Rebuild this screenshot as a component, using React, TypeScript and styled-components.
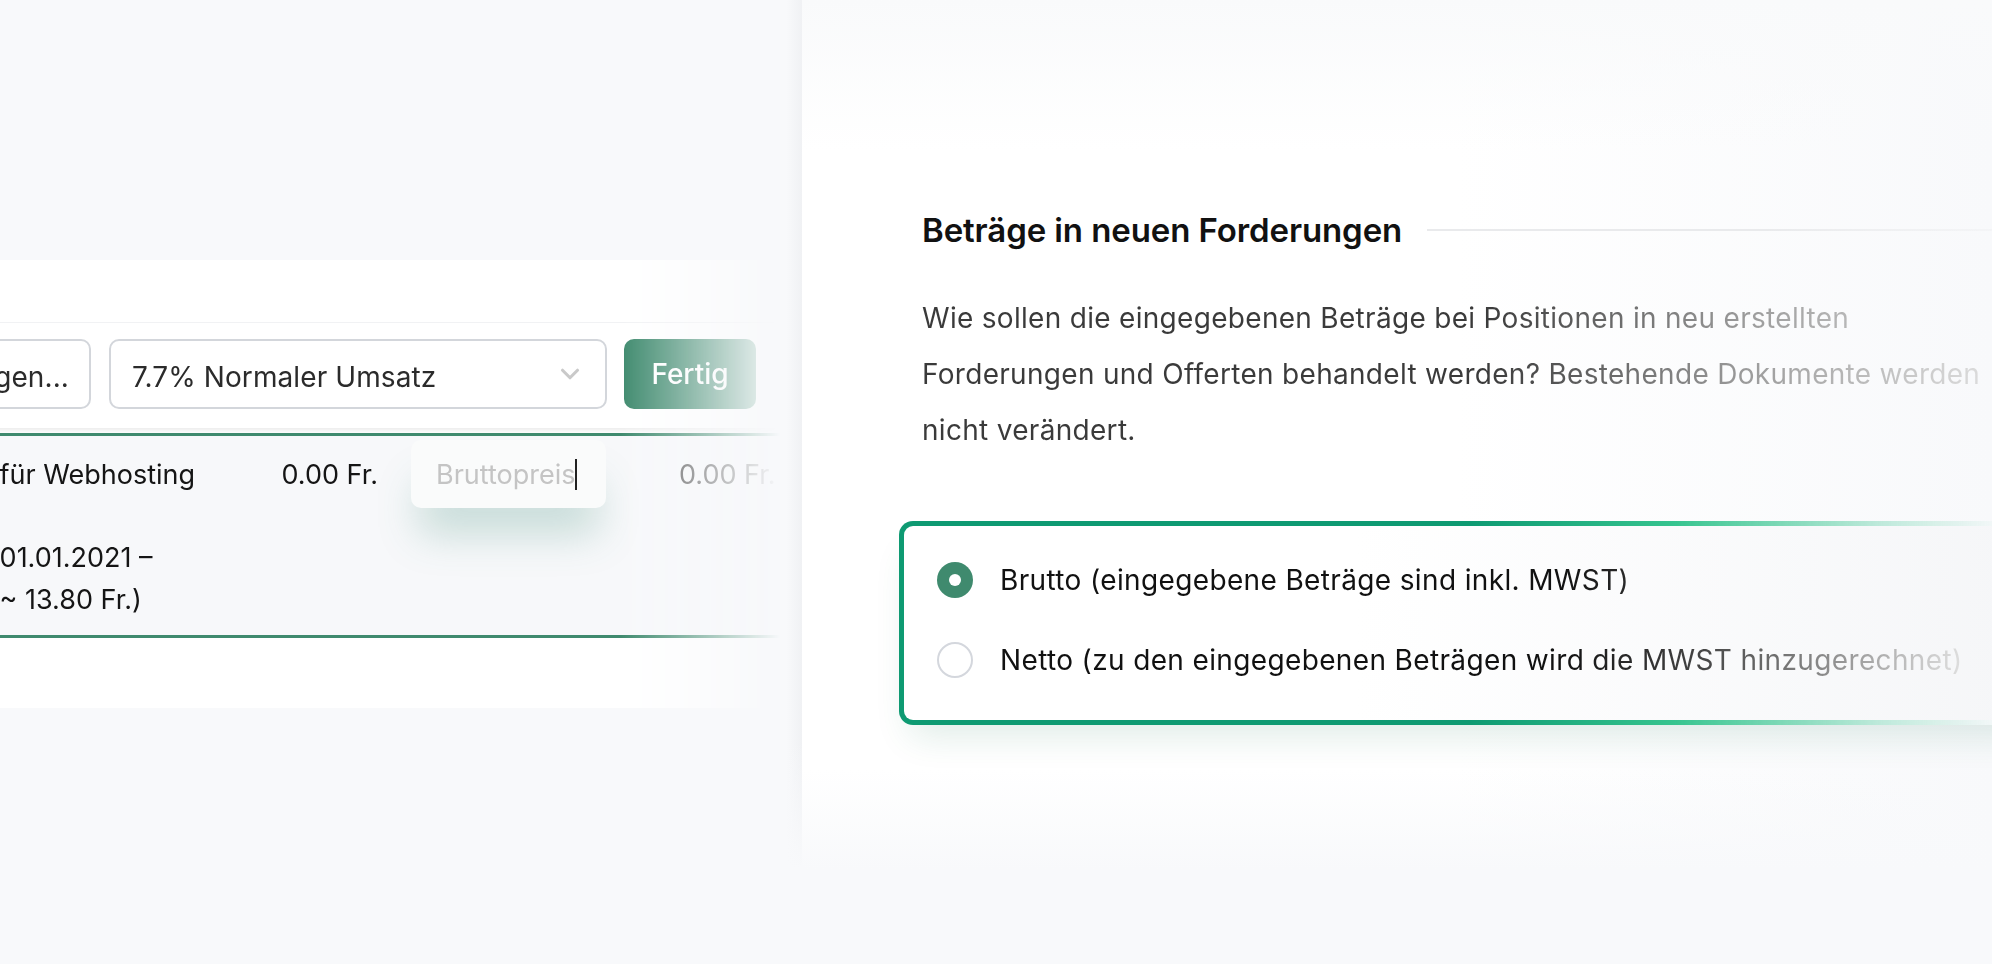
import styled, { createGlobalStyle } from 'styled-components';
import { ChevronDown } from 'lucide-react';

const GlobalStyle = createGlobalStyle`
  html, body {
    margin: 0;
    padding: 0;
    background: #f8f9fb;
  }
  body {
    font-family: 'Inter', 'Noto Sans', sans-serif;
    -webkit-font-smoothing: antialiased;
  }
  * {
    box-sizing: border-box;
  }
`;

const Page = styled.div`
  display: flex;
  align-items: flex-start;
  width: 1992px;
  height: 964px;
  overflow: hidden;
  background: #f8f9fb;
`;

/* left: the invoice editor, cut at the page edge */

const LeftPane = styled.div`
  width: 802px;
  height: 964px;
  flex-shrink: 0;
  padding-top: 260px;
  /* soft shade where the settings panel sits on top, fading out at the bottom */
  background:
    linear-gradient(to bottom, rgba(248, 249, 251, 0) 740px, #f8f9fb 870px) right top / 16px 870px no-repeat,
    linear-gradient(to left, rgba(20, 30, 50, 0.035), rgba(20, 30, 50, 0) 16px) right top / 16px 870px no-repeat;
`;

const Card = styled.div`
  margin-left: -340px;
  width: 1120px;
  padding: 62px 0 70px;
  background: #fff;
  box-shadow: 0 10px 30px rgba(20, 30, 50, 0.06);
  -webkit-mask-image: linear-gradient(to right, #000 0, #000 960px, transparent 1120px);
  mask-image: linear-gradient(to right, #000 0, #000 960px, transparent 1120px);
`;

const Toolbar = styled.div`
  display: flex;
  align-items: center;
  gap: 18px;
  padding: 16px 24px 19px;
  border-top: 1px solid #f1f2f4;
  box-shadow: 0 3px 4px rgba(0, 0, 0, 0.07);
`;

const Select = styled.div<{ $width: number; $align?: 'start' | 'end' }>`
  display: flex;
  align-items: center;
  justify-content: ${(p) => (p.$align === 'end' ? 'flex-end' : 'space-between')};
  width: ${(p) => p.$width}px;
  height: 70px;
  padding: 5px 20px 0 21px;
  border: 2px solid #d3d6db;
  border-radius: 10px;
  background: #fff;
  color: #2b2b2b;
  font-size: 28px;
  letter-spacing: 0.1px;
  white-space: nowrap;
  overflow: hidden;

  svg {
    margin-top: -5px;
  }
`;

const DoneButton = styled.button`
  width: 132px;
  height: 70px;
  margin-left: -1px;
  border: none;
  border-radius: 10px;
  background: #3f8a6e;
  color: #fff;
  font-family: inherit;
  font-size: 28px;
  font-weight: 500;
`;

const ItemPanel = styled.div`
  margin-top: 5px;
  padding: 4px 0 14px 24px;
  background: #f7f8fa;
  border-top: 3px solid #3f8a6e;
  border-bottom: 3px solid #3f8a6e;
`;

const ItemGrid = styled.div`
  display: grid;
  grid-template-columns: 521px 140px 195px 1fr;
  column-gap: 33px;
  align-items: center;
  font-size: 27px;
  color: #151515;
`;

const Lead = styled.span`
  display: inline-block;
  width: 308px;
  text-align: right;
`;

const Cell = styled.div<{ $align?: 'right'; $muted?: boolean; $pad?: number }>`
  white-space: nowrap;
  text-align: ${(p) => p.$align || 'left'};
  padding-left: ${(p) => p.$pad || 0}px;
  color: ${(p) => (p.$muted ? '#555' : 'inherit')};
`;

const PriceInput = styled.div`
  display: flex;
  align-items: center;
  height: 68px;
  padding-left: 25px;
  border-radius: 10px;
  background: #fafbfb;
  color: #c4c4c4;
  box-shadow: 0 34px 40px -8px rgba(60, 140, 120, 0.26);
`;

const Caret = styled.span`
  display: inline-block;
  width: 2px;
  height: 31px;
  margin-left: -1px;
  background: #222;
`;

const Notes = styled.div`
  grid-column: 1;
  margin-top: 29px;
  line-height: 42px;
  white-space: nowrap;
`;

/* right: the setting */

const RightPane = styled.div`
  flex: 1;
  height: 964px;
  padding: 210px 0 0 120px;
  background:
    linear-gradient(to bottom, #f9fafb 0, rgba(248, 249, 251, 0) 150px, rgba(248, 249, 251, 0) 770px, #f8f9fb 870px),
    linear-gradient(to right, #fff 55%, #f8f9fb 100%);
  overflow: hidden;
`;

const TitleRow = styled.div`
  display: flex;
  align-items: center;
  gap: 25px;
  height: 40px;
`;

const Title = styled.h2`
  margin: 0;
  font-size: 33px;
  font-weight: 600;
  letter-spacing: -0.1px;
  color: #111;
  white-space: nowrap;
`;

const Rule = styled.div`
  flex: 1;
  height: 2px;
  background: linear-gradient(to right, #e9eaec 60%, rgba(233, 234, 236, 0.3));
`;

const Lede = styled.p`
  width: 1070px;
  margin: 40px 0 0;
  font-size: 28px;
  line-height: 56px;
  letter-spacing: 0.3px;
  white-space: nowrap;
  background: linear-gradient(to right, #3a3a3a 0, #3a3a3a 560px, #9a9a9a 820px, #dedede 1070px);
  -webkit-background-clip: text;
  background-clip: text;
  color: transparent;
`;

const OptionBox = styled.div`
  width: 1141px;
  margin: 63px 0 0 -23px;
  padding: 34px 0 40px 33px;
  display: flex;
  flex-direction: column;
  gap: 40px;
  border: 5px solid transparent;
  border-radius: 14px;
  background:
    linear-gradient(to right, #fff 40%, #f5f6f8 100%) padding-box,
    linear-gradient(to right, #0e9a72 0, #0e9a72 50%, #36c48f 68%, rgba(54, 196, 143, 0.3) 86%, rgba(54, 196, 143, 0) 97%) border-box;
  box-shadow: 0 22px 36px -12px rgba(20, 110, 80, 0.14);
`;

const Option = styled.label`
  display: flex;
  align-items: center;
  gap: 27px;
  height: 40px;
`;

const RadioDot = styled.span<{ $on?: boolean }>`
  flex-shrink: 0;
  width: 36px;
  height: 36px;
  border-radius: 50%;
  background: ${(p) => (p.$on ? '#3f8a6e' : '#fff')};
  border: ${(p) => (p.$on ? 'none' : '2px solid #d4d7dd')};
  display: flex;
  align-items: center;
  justify-content: center;
  &::after {
    content: '';
    display: ${(p) => (p.$on ? 'block' : 'none')};
    width: 12px;
    height: 12px;
    border-radius: 50%;
    background: #fff;
  }
`;

const OptionText = styled.span`
  flex: 1;
  font-size: 28px;
  letter-spacing: 0.36px;
  white-space: nowrap;
  background: linear-gradient(to right, #111 0, #111 560px, #444 700px, #888 820px, #bbb 900px, #ddd 960px);
  -webkit-background-clip: text;
  background-clip: text;
  color: transparent;
`;

export default function App() {
  return (
    <>
      <GlobalStyle />
      <Page>
        <LeftPane>
          <Card>
            <Toolbar>
              <Select $width={407} $align="end">Einheit wählen: Rechnungsstellungen...</Select>
              <Select $width={498}>
                <span>7.7% Normaler Umsatz</span>
                <ChevronDown size={30} strokeWidth={2.5} color="#c9c9c9" />
              </Select>
              <DoneButton>Fertig</DoneButton>
            </Toolbar>
            <ItemPanel>
              <ItemGrid>
                <Cell>
                  <Lead>Jahresgebühr</Lead> für Webhosting
                </Cell>
                <Cell $align="right">0.00 Fr.</Cell>
                <PriceInput>
                  Bruttopreis
                  <Caret />
                </PriceInput>
                <Cell $muted $pad={40}>0.00 Fr.</Cell>
                <Notes>
                  <div>
                    <Lead>Leistungszeitraum</Lead> 01.01.2021 –
                  </div>
                  <div>
                    <Lead>31.12.2021 (monatlich</Lead> ~ 13.80 Fr.)
                  </div>
                </Notes>
              </ItemGrid>
            </ItemPanel>
          </Card>
        </LeftPane>

        <RightPane>
          <TitleRow>
            <Title>Beträge in neuen Forderungen</Title>
            <Rule />
          </TitleRow>
          <Lede>
            Wie sollen die eingegebenen Beträge bei Positionen in neu erstellten
            <br />
            Forderungen und Offerten behandelt werden? Bestehende Dokumente werden
            <br />
            nicht verändert.
          </Lede>
          <OptionBox>
            <Option>
              <RadioDot $on />
              <OptionText>Brutto (eingegebene Beträge sind inkl. MWST)</OptionText>
            </Option>
            <Option>
              <RadioDot />
              <OptionText>Netto (zu den eingegebenen Beträgen wird die MWST hinzugerechnet)</OptionText>
            </Option>
          </OptionBox>
        </RightPane>
      </Page>
    </>
  );
}
